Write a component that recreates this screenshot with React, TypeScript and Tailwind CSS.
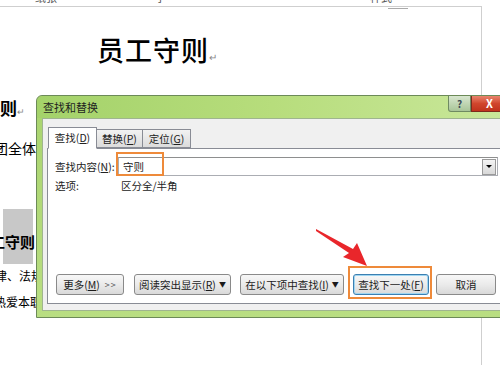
const ui = "font-['Noto_Sans_CJK_SC','Noto_Sans',sans-serif]";

function WinButton(p: { children: React.ReactNode; w: string; focus?: boolean }) {
  return (
    <div
      className={`${p.w} h-[21px] shrink-0 flex items-center justify-center whitespace-nowrap rounded-[3px] border text-[10.5px] text-[#1b1b1b] bg-linear-to-b from-[#f7f7f7] via-[#ebebeb] to-[#d9d9d9] ${
        p.focus ? "border-[#3c7fb1] shadow-[inset_0_0_0_1px_#9fd6f2]" : "border-[#8a8a8a]"
      }`}
    >
      {p.children}
    </div>
  );
}

function Tab(p: { label: string; k: string; active?: boolean; w: string }) {
  return (
    <div
      className={`${p.w} flex items-center justify-center whitespace-nowrap border border-[#898c95] text-[10.5px] text-[#222] ${
        p.active
          ? "bg-white border-b-white relative z-10 -mb-px h-[22px]"
          : "bg-linear-to-b from-[#f2f2f2] to-[#dcdcdc] mt-[2px] h-[19px] -ml-px"
      }`}
    >
      {p.label}(<u>{p.k}</u>)
    </div>
  );
}

function Dialog() {
  return (
    <div className={`absolute left-[36px] top-[95px] w-[472px] h-[223px] rounded-t-[6px] border border-[#6c8a58] bg-linear-to-b from-[#a9d46e] to-[#b9de82] ${ui}`}>
      <div className="h-[22px] flex items-center pl-[6px] relative bg-linear-to-r from-[#a4d26a] via-[#b7dd7c] to-[#c9e79a] rounded-t-[6px]">
        <span className="text-[11px] text-[#1f1f1f] mt-[1px]">查找和替换</span>
        <div className="absolute left-[411px] top-0 w-[23px] h-[16px] border border-[#6f8a62] border-t-0 rounded-bl-[3px] bg-linear-to-b from-[#d8e6cf] to-[#a9c598] flex items-center justify-center text-[10px] font-bold text-[#3c4a56]">
          ?
        </div>
        <div className="absolute left-[434px] top-0 w-[44px] h-[16px] border border-[#7d2a1c] border-t-0 bg-linear-to-b from-[#e8836c] via-[#d1462d] to-[#c0321c] flex items-center pl-[14px] text-[11px] font-bold text-white">
          X
        </div>
      </div>
      <div className="ml-[5px] h-[193px] bg-[#f0f0f0] border border-[#9fb58f] pt-[8px]">
        <div className="flex ml-[5px] items-end">
          <Tab label="查找" k="D" active w="w-[49px]" />
          <Tab label="替换" k="P" w="w-[47px]" />
          <Tab label="定位" k="G" w="w-[49px]" />
        </div>
        <div className="ml-[4px] h-[156px] bg-white border border-[#898c95] text-[10.5px] text-[#222]">
          <div className="flex items-center pt-[8px] pl-[7px]">
            <span className="w-[63px] shrink-0 whitespace-nowrap">
              查找内容(<u>N</u>):
            </span>
            <div className="w-[380px] shrink-0 h-[19px] border border-[#abadb3] border-t-[#8e8f8f] flex items-center justify-between pl-[4px] pr-px">
              <span>守则</span>
              <div className="w-[14px] h-[16px] border border-[#9a9a9a] bg-linear-to-b from-[#f4f4f4] to-[#d8d8d8] flex items-center justify-center">
                <div className="w-0 h-0 border-l-[3px] border-r-[3px] border-t-[3px] border-l-transparent border-r-transparent border-t-black" />
              </div>
            </div>
          </div>
          <div className="flex pl-[7px] mt-[2px] leading-[16px]">
            <span className="w-[66px]">选项:</span>
            <span>区分全/半角</span>
          </div>
          <div className="flex items-center pl-[8px] mt-[80px]">
            <WinButton w="w-[68px]">
              更多(<u>M</u>)<span className="ml-[5px] text-[#555] text-[9px] tracking-[1px]">&gt;&gt;</span>
            </WinButton>
            <div className="w-[10px] shrink-0" />
            <WinButton w="w-[97px]">
              阅读突出显示(<u>R</u>)<span className="ml-[3px] text-[7px]">▼</span>
            </WinButton>
            <div className="w-[9px] shrink-0" />
            <WinButton w="w-[104px]">
              在以下项中查找(<u>I</u>)<span className="ml-[3px] text-[7px]">▼</span>
            </WinButton>
            <div className="w-[9px] shrink-0" />
            <WinButton w="w-[76px]" focus>
              查找下一处(<u>F</u>)
            </WinButton>
            <div className="w-[7px] shrink-0" />
            <WinButton w="w-[60px]">取消</WinButton>
          </div>
        </div>
      </div>
    </div>
  );
}

export default function App() {
  return (
    <div className={`relative w-[500px] h-[365px] overflow-hidden bg-white ${ui}`}>
      <div className="h-[7px] w-[482px] border-b border-[#cfcfcf] overflow-hidden relative text-[11px] text-[#555] leading-none">
        <span className="absolute left-[35px] -top-[8px]">纸张</span>
        <span className="absolute left-[155px] -top-[8px]">字</span>
        <span className="absolute left-[370px] -top-[8px]">样式</span>
      </div>
      <div className="flex h-[358px]">
        <div className="w-[482px] border-r border-[#cfcfcf] relative">
          <div className="ml-[388px] mt-px w-[20px] border-t border-[#aaa]" />
          <div className="pl-[97px] mt-[26px] text-[27px] font-medium text-black leading-[30px] tracking-[1px]">
            员工守则<span className="text-[10px] text-[#888] font-normal">↵</span>
          </div>
          <div className="mt-[26px] text-[17px] font-bold leading-[20px]">
            则<span className="text-[9px] text-[#888] font-normal">↵</span>
          </div>
          <div className="-ml-[6px] mt-[17px] text-[14px] leading-[18px] whitespace-nowrap">团全体员工</div>
          <div className="ml-[3px] mt-[52px] w-[30px] h-[55px] bg-[#c8c8c8] flex items-end pb-[13px]">
            <span className="-ml-[13px] text-[15px] font-bold leading-[18px] whitespace-nowrap">工守则</span>
          </div>
          <div className="-ml-[5px] mt-[3px] text-[12px] leading-[18px] whitespace-nowrap">律、法规</div>
          <div className="-ml-[6px] mt-[8px] text-[12px] leading-[18px] whitespace-nowrap">热爱本职</div>
        </div>
      </div>
      <Dialog />
      <div className="absolute left-[116px] top-[152px] w-[48px] h-[24px] border-2 border-[#ee8a3a]" />
      <div className="absolute left-[348px] top-[266px] w-[84px] h-[33px] border-2 border-[#ee8a3a]" />
      <svg className="absolute left-0 top-0" width="500" height="365" viewBox="0 0 500 365">
        <polygon
          points="316,229 353,249 357,243 367,266 343,257 349,253 316,231"
          fill="#e9262b"
        />
      </svg>
    </div>
  );
}
